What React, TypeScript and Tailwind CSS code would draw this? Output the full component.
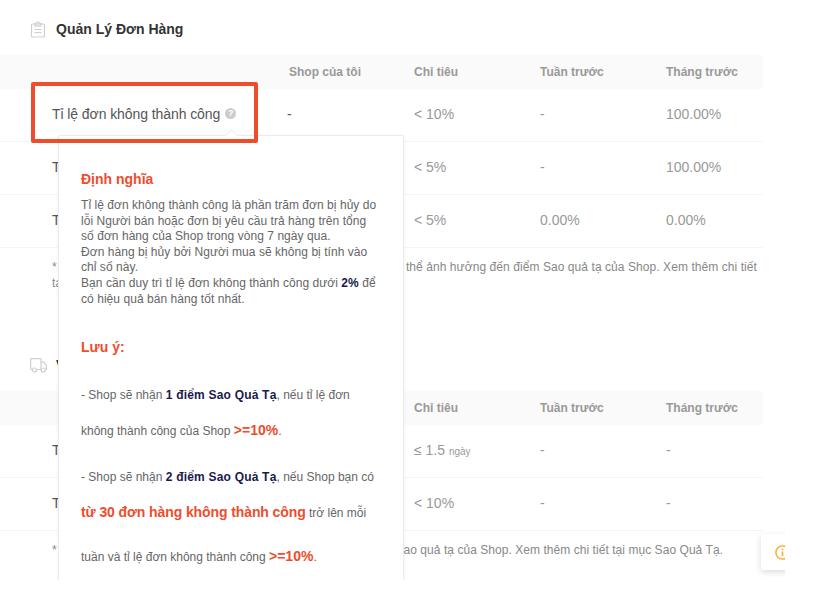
const rowGrid = 'grid grid-cols-[289px_125px_126px_126px_1fr] items-center'

function ClipboardIcon() {
  return (
    <svg width="16" height="17" viewBox="0 0 16 17" fill="none" stroke="#cfcfcf" strokeWidth="1.2">
      <path d="M5 3H2.6C2 3 1.5 3.5 1.5 4.1V14.9C1.5 15.5 2 16 2.6 16H13.4C14 16 14.5 15.5 14.5 14.9V4.1C14.5 3.5 14 3 13.4 3H11" />
      <path d="M5 2.5H6.4C6.6 1.5 7.2 1 8 1S9.4 1.5 9.6 2.5H11V5H5V2.5Z" fill="#e6e6e6" />
      <path d="M4.5 8.5H11.5M4.5 11.5H11.5" />
    </svg>
  )
}

function TruckIcon() {
  return (
    <svg width="17" height="15" viewBox="0 0 17 15" fill="none" stroke="#cfcfcf" strokeWidth="1.2">
      <path d="M2.5 11.5H1.2C0.9 11.5 0.6 11.2 0.6 10.9V1.4C0.6 1 0.9 0.7 1.2 0.7H10.4C10.8 0.7 11 1 11 1.4V11.5H6.5" />
      <path d="M11 4.2H14L16.4 7.2V11.5H15M11 11.5H11.5" />
      <circle cx="4.5" cy="12" r="2" />
      <circle cx="13.3" cy="12" r="2" />
    </svg>
  )
}

function HelpIcon() {
  return (
    <span className="ml-[5px] inline-flex h-[11px] w-[11px] items-center justify-center rounded-full bg-[#cccccc] font-['Liberation_Sans',sans-serif] text-[9px] font-bold leading-none text-white">
      ?
    </span>
  )
}

type Row = { name: React.ReactNode; mine: string; target: React.ReactNode; week: string; month: string }

function Section({ icon, title, rows, note, noteClass }: { icon: React.ReactNode; title: string; rows: Row[]; note: React.ReactNode; noteClass: string }) {
  return (
    <section>
      <div className="flex h-[52px] items-center">
        <div className="flex w-[56px] pl-[30px]">{icon}</div>
        <h2 className="text-sm font-bold text-[#333333]">{title}</h2>
      </div>
      <div className={`${rowGrid} h-[34px] bg-[#fafafa] text-xs font-bold text-[#999999]`}>
        <div />
        <div>Shop của tôi</div>
        <div>Chỉ tiêu</div>
        <div>Tuần trước</div>
        <div>Tháng trước</div>
      </div>
      {rows.map((row, i) => (
        <div key={i} className={`${rowGrid} h-[53px] border-b border-[#f5f5f5] pb-[3px] text-sm text-[#999999]`}>
          <div className="flex items-center pl-[52px] tracking-[-0.08px] text-[#555555]">{row.name}</div>
          <div className="-ml-[2px] text-[#555555]">{row.mine}</div>
          <div>{row.target}</div>
          <div>{row.week}</div>
          <div>{row.month}</div>
        </div>
      ))}
      <div className={noteClass}>{note}</div>
    </section>
  )
}

function Tooltip() {
  return (
    <div className="absolute left-[58px] top-[135px] h-[460px] w-[346px] rounded-[2px] border border-[#ececec] bg-white pl-[22px] pr-[24px] pt-[34px] text-xs leading-[15.6px] text-[#666666] shadow-[0_1px_4px_rgba(0,0,0,0.06)]">
      <div className="absolute left-[168px] top-[-5px] h-[9px] w-[9px] rotate-45 border-l border-t border-[#ececec] bg-white" />
      <h3 className="text-sm font-bold leading-[18px] text-[#ee4d2d]">Định nghĩa</h3>
      <p className="mt-[10px] tracking-[0.05px]">
        Tỉ lệ đơn không thành công là phần trăm đơn bị hủy do lỗi Người bán hoặc đơn bị yêu cầu trả hàng trên tổng số đơn hàng của Shop trong vòng 7 ngày qua.
        <br />
        Đơn hàng bị hủy bởi Người mua sẽ không bị tính vào chỉ số này.
        <br />
        Bạn cần duy trì tỉ lệ đơn không thành công dưới <b className="text-[#1a1a4a]">2%</b> để có hiệu quả bán hàng tốt nhất.
      </p>
      <h3 className="mt-[31px] text-sm font-bold leading-[18px] text-[#ee4d2d]">Lưu ý:</h3>
      <p className="mt-[21px] leading-[36px]">
        - Shop sẽ nhận <b className="tracking-[0.2px] text-[#1a1a4a]">1 điểm Sao Quả Tạ</b>, nếu tỉ lệ đơn không thành công của Shop{' '}
        <b className="text-sm text-[#ee4d2d]">&gt;=10%</b>.
      </p>
      <p className="mt-[10px] leading-[36px]">
        - Shop sẽ nhận <b className="tracking-[0.2px] text-[#1a1a4a]">2 điểm Sao Quả Tạ</b>, nếu Shop bạn có{' '}
        <b className="text-sm tracking-[-0.1px] text-[#ee4d2d]">từ 30 đơn hàng không thành công</b> trở lên mỗi
      </p>
      <p className="mt-[8px] leading-[36px]">
        tuần và tỉ lệ đơn không thành công <b className="text-sm text-[#ee4d2d]">&gt;=10%</b>.
      </p>
    </div>
  )
}

export default function App() {
  const orderRows: Row[] = [
    { name: <>Tỉ lệ đơn không thành công<HelpIcon /></>, mine: '-', target: '< 10%', week: '-', month: '100.00%' },
    { name: 'Tỉ lệ hủy đơn', mine: '-', target: '< 5%', week: '-', month: '100.00%' },
    { name: 'Tỉ lệ Trả hàng/Hoàn tiền', mine: '-', target: '< 5%', week: '0.00%', month: '0.00%' },
  ]
  const shipRows: Row[] = [
    { name: 'Thời gian chuẩn bị hàng', mine: '-', target: <>≤ 1.5 <span className="text-[10px]">ngày</span></>, week: '-', month: '-' },
    { name: 'Tỉ lệ giao hàng trễ', mine: '-', target: '< 10%', week: '-', month: '-' },
  ]

  return (
    <div className="h-[596px] w-[813px] overflow-hidden bg-white font-['Liberation_Sans',Arial,sans-serif]">
      <div className="relative h-[580px] w-[785px] overflow-hidden pt-[3px]">
        <div className="w-[763px]">
          <Section
            icon={<ClipboardIcon />}
            title="Quản Lý Đơn Hàng"
            rows={orderRows}
            noteClass="h-[91px] pl-[52px] pr-[6px] pt-[12px] text-xs leading-[15.5px] tracking-[0.07px] text-[#888888]"
            note={
              <>
                <div className="flex justify-between">
                  <span>*</span>
                  <span>thể ảnh hưởng đến điểm Sao quả tạ của Shop. Xem thêm chi tiết</span>
                </div>
                <div>tại mục Sao Quả Tạ.</div>
              </>
            }
          />
          <Section
            icon={<TruckIcon />}
            title="Vận Chuyển"
            rows={shipRows}
            noteClass="pl-[52px] pr-[40px] pt-[12px] text-xs leading-[15.5px] tracking-[0.05px] text-[#888888]"
            note={
              <div className="flex justify-between">
                <span>*</span>
                <span>Sao quả tạ của Shop. Xem thêm chi tiết tại mục Sao Quả Tạ.</span>
              </div>
            }
          />
        </div>
        <Tooltip />
        <div className="absolute left-[31px] top-[82px] h-[61px] w-[227px] rounded-[2px] border-[4px] border-[#ee4d2d]" />
        <div className="absolute left-[761px] top-[534px] flex h-[36px] w-[40px] items-center rounded-[2px] bg-white pl-[14px] shadow-[0_2px_6px_rgba(0,0,0,0.15)]">
          <svg width="15" height="15" viewBox="0 0 15 15" fill="none" stroke="#ffa726" strokeWidth="1.4">
            <circle cx="7.5" cy="7.5" r="6.6" />
            <path d="M7.5 6.5V11M7.5 3.8V5.2" strokeWidth="1.6" />
          </svg>
        </div>
      </div>
    </div>
  )
}
